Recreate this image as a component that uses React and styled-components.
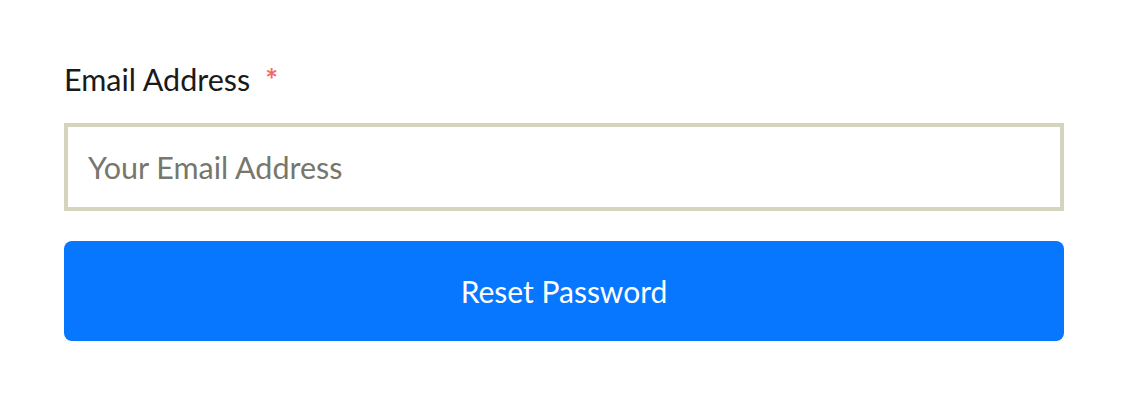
import React from 'react'
import styled, { createGlobalStyle } from 'styled-components'

const GlobalStyle = createGlobalStyle`
  html, body {
    margin: 0;
    padding: 0;
    background: #ffffff;
  }
  body {
    font-family: Lato, "Noto Sans", sans-serif;
  }
`

const Form = styled.form`
  width: 1000px;
  padding: 59px 64px 0;
  display: flex;
  flex-direction: column;
`

const Label = styled.label`
  font-size: 30.5px;
  line-height: 40px;
  color: #1a1a1a;
  margin-bottom: 24px;
`

const Required = styled.span`
  color: #ef6b6b;
  margin-left: 15px;
  font-size: 30px;
  font-weight: 700;
`

const Input = styled.input`
  box-sizing: border-box;
  width: 100%;
  height: 88px;
  border: 4px solid #d4d4bf;
  border-radius: 0;
  padding: 0 20px;
  font-family: inherit;
  font-size: 30.5px;
  color: #333;
  outline: none;
  &::placeholder {
    color: #77776c;
  }
`

const Button = styled.button`
  margin-top: 30px;
  height: 100px;
  width: 100%;
  border: none;
  border-radius: 8px;
  background: #0777ff;
  color: #ffffff;
  font-family: inherit;
  font-size: 30px;
  cursor: pointer;
`

export default () => (
  <>
    <GlobalStyle />
    <Form onSubmit={e => e.preventDefault()}>
      <Label htmlFor='email'>
        Email Address<Required>*</Required>
      </Label>
      <Input id='email' type='email' placeholder='Your Email Address' />
      <Button type='submit'>Reset Password</Button>
    </Form>
  </>
)
